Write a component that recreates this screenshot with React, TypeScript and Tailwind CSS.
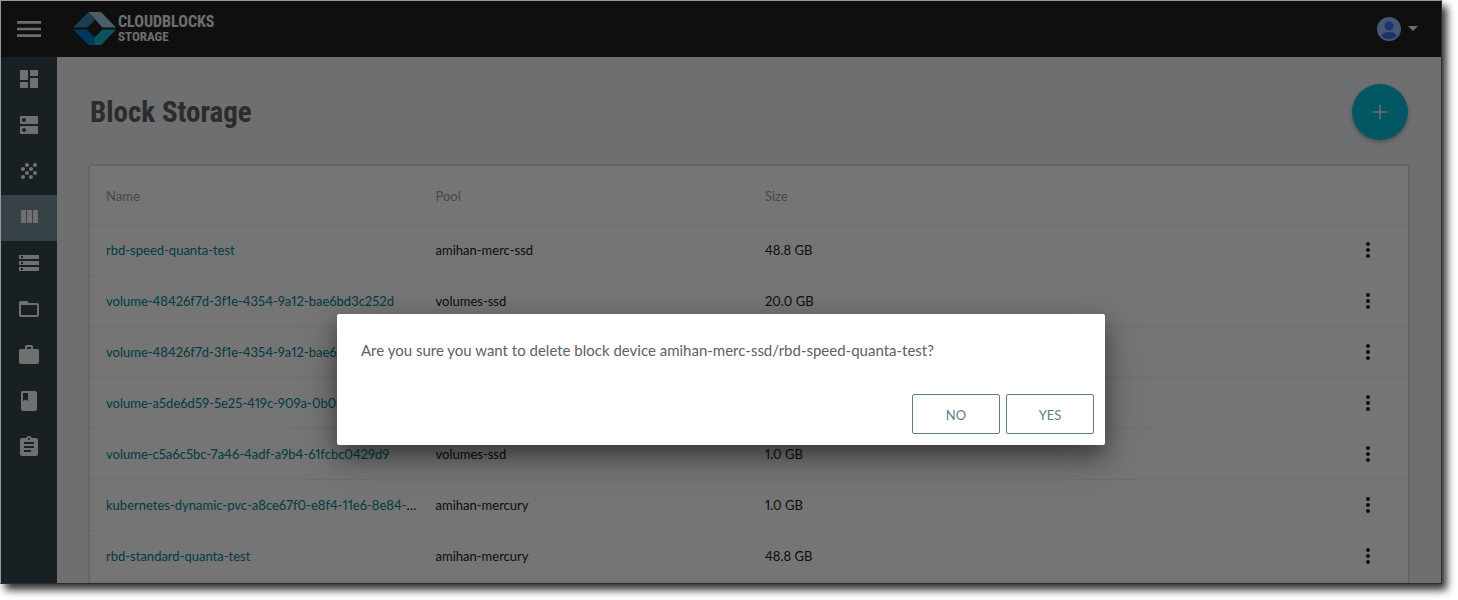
import React from 'react';

type IconProps = { d: string; className?: string };

function Icon({ d, className = 'size-6' }: IconProps) {
  return (
    <svg viewBox="0 0 24 24" className={className} fill="currentColor" aria-hidden="true">
      <path d={d} />
    </svg>
  );
}

const MENU = 'M3 18h18v-2H3v2zm0-5h18v-2H3v2zm0-7v2h18V6H3z';
const MORE =
  'M12 8c1.1 0 2-.9 2-2s-.9-2-2-2-2 .9-2 2 .9 2 2 2zm0 2c-1.1 0-2 .9-2 2s.9 2 2 2 2-.9 2-2-.9-2-2-2zm0 6c-1.1 0-2 .9-2 2s.9 2 2 2 2-.9 2-2-.9-2-2-2z';
const ADD = 'M19.2 12.75h-6.45v6.45h-1.5v-6.45H4.8v-1.5h6.45V4.8h1.5v6.45h6.45z';

const nav = [
  { label: 'Dashboard', d: 'M3 13h8V3H3v10zm0 8h8v-6H3v6zm10 0h8V11h-8v10zm0-18v6h8V3h-8z' },
  {
    label: 'Hosts',
    d: 'M20 13H4c-.55 0-1 .45-1 1v6c0 .55.45 1 1 1h16c.55 0 1-.45 1-1v-6c0-.55-.45-1-1-1zM7 19c-1.1 0-2-.9-2-2s.9-2 2-2 2 .9 2 2-.9 2-2 2zM20 3H4c-.55 0-1 .45-1 1v6c0 .55.45 1 1 1h16c.55 0 1-.45 1-1V4c0-.55-.45-1-1-1zM7 9c-1.1 0-2-.9-2-2s.9-2 2-2 2 .9 2 2-.9 2-2 2z',
  },
  {
    label: 'Pools',
    d: 'M10 12c-1.1 0-2 .9-2 2s.9 2 2 2 2-.9 2-2-.9-2-2-2zM6 8c-1.1 0-2 .9-2 2s.9 2 2 2 2-.9 2-2-.9-2-2-2zm0 8c-1.1 0-2 .9-2 2s.9 2 2 2 2-.9 2-2-.9-2-2-2zm12-8c1.1 0 2-.9 2-2s-.9-2-2-2-2 .9-2 2 .9 2 2 2zm-4 8c-1.1 0-2 .9-2 2s.9 2 2 2 2-.9 2-2-.9-2-2-2zm4-4c-1.1 0-2 .9-2 2s.9 2 2 2 2-.9 2-2-.9-2-2-2zm-4-4c-1.1 0-2 .9-2 2s.9 2 2 2 2-.9 2-2-.9-2-2-2zm-4-4c-1.1 0-2 .9-2 2s.9 2 2 2 2-.9 2-2-.9-2-2-2z',
  },
  { label: 'Block Storage', active: true, d: 'M10 18h5V5h-5v13zm-6 0h5V5H4v13zM16 5v13h5V5h-5z' },
  {
    label: 'Object Storage',
    d: 'M2 20h20v-4H2v4zm2-3h2v2H4v-2zM2 4v4h20V4H2zm4 3H4V5h2v2zm-4 7h20v-4H2v4zm2-3h2v2H4v-2z',
  },
  {
    label: 'File Storage',
    d: 'M20 6h-8l-2-2H4c-1.1 0-1.99.9-1.99 2L2 18c0 1.1.9 2 2 2h16c1.1 0 2-.9 2-2V8c0-1.1-.9-2-2-2zm0 12H4V8h16v10z',
  },
  {
    label: 'Jobs',
    d: 'M20 6h-4V4c0-1.11-.89-2-2-2h-4c-1.11 0-2 .89-2 2v2H4c-1.11 0-1.99.89-1.99 2L2 19c0 1.11.89 2 2 2h16c1.11 0 2-.89 2-2V8c0-1.11-.89-2-2-2zm-6 0h-4V4h4v2z',
  },
  {
    label: 'Docs',
    d: 'M18 2H6c-1.1 0-2 .9-2 2v16c0 1.1.9 2 2 2h12c1.1 0 2-.9 2-2V4c0-1.1-.9-2-2-2zM6 4h5v8l-2.5-1.5L6 12V4z',
  },
  {
    label: 'Logs',
    d: 'M19 3h-4.18C14.4 1.84 13.3 1 12 1c-1.3 0-2.4.84-2.82 2H5c-1.1 0-2 .9-2 2v14c0 1.1.9 2 2 2h14c1.1 0 2-.9 2-2V5c0-1.1-.9-2-2-2zm-7 0c.55 0 1 .45 1 1s-.45 1-1 1-1-.45-1-1 .45-1 1-1zm2 14H7v-2h7v2zm3-4H7v-2h10v2zm0-4H7V7h10v2z',
  },
];

const devices = [
  { name: 'rbd-speed-quanta-test', pool: 'amihan-merc-ssd', size: '48.8 GB' },
  { name: 'volume-48426f7d-3f1e-4354-9a12-bae6bd3c252d', pool: 'volumes-ssd', size: '20.0 GB' },
  { name: 'volume-48426f7d-3f1e-4354-9a12-bae6bd3c252d', pool: 'volumes-ssd', size: '20.0 GB' },
  { name: 'volume-a5de6d59-5e25-419c-909a-0b0a4c1d7e52', pool: 'volumes-ssd', size: '1.0 GB' },
  { name: 'volume-c5a6c5bc-7a46-4adf-a9b4-61fcbc0429d9', pool: 'volumes-ssd', size: '1.0 GB' },
  { name: 'kubernetes-dynamic-pvc-a8ce67f0-e8f4-11e6-8e84-', clipped: true, pool: 'amihan-mercury', size: '1.0 GB' },
  { name: 'rbd-standard-quanta-test', pool: 'amihan-mercury', size: '48.8 GB' },
];

function Logo() {
  return (
    <a href="#" className="flex items-center gap-[2px] text-[#eeeeee]">
      <svg viewBox="0 0 43 33" className="h-[33px] w-[43px]" aria-hidden="true">
        <path d="M0 15.5 15.5 0 22 8 14 15.5Z" fill="#3d88ae" />
        <path d="M15.5 0H28L43 15.5H29.5Z" fill="#a3cde6" />
        <path d="M0 17.5H14L21.5 25.5V33H15.5Z" fill="#007acc" />
        <path d="M29.5 17.5H43L28 33H21.5V25.5Z" fill="#1ab8cc" />
      </svg>
      <span className="flex flex-col font-['Liberation_Sans_Narrow','Roboto_Condensed',sans-serif] font-bold uppercase">
        <span className="text-[16px] leading-4">Cloudblocks</span>
        <span className="text-[13px] leading-[14px]">Storage</span>
      </span>
    </a>
  );
}

function Header() {
  return (
    <header className="flex h-14 shrink-0 items-center bg-[#212121] pr-[23px] pb-px pl-3 text-[#eeeeee]">
      <button type="button" aria-label="Menu" className="mr-[28px]">
        <Icon d={MENU} className="size-8" />
      </button>
      <Logo />
      <button type="button" aria-label="Account" className="ml-auto flex items-center gap-[7px]">
        <svg viewBox="0 0 24 24" className="size-6" aria-hidden="true">
          <circle cx="12" cy="12" r="12" fill="#9dbcff" />
          <circle cx="12" cy="9" r="4.5" fill="#3f6fe8" />
          <path d="M4.5 19c.5-2.5 3-4 7.5-4s7 1.5 7.5 4a10.5 10.5 0 0 1-15 0Z" fill="#3f6fe8" />
        </svg>
        <svg viewBox="0 0 10 5" className="h-[5px] w-[10px]" fill="currentColor" aria-hidden="true">
          <path d="M0 0h10L5 5z" />
        </svg>
      </button>
    </header>
  );
}

function Sidebar() {
  return (
    <nav className="flex w-14 shrink-0 flex-col bg-[#37474f] text-[#f5f5f5]">
      {nav.map((item) => (
        <a
          key={item.label}
          href="#"
          aria-label={item.label}
          className={
            item.active
              ? 'flex h-[46px] items-center justify-center bg-[#78909c] pb-[2px]'
              : 'flex h-[46px] items-center justify-center pb-[2px]'
          }
        >
          <Icon d={item.d} />
        </a>
      ))}
    </nav>
  );
}

function DeviceTable() {
  return (
    <div className="bg-white pb-14 shadow-[0_0_2px_1px_rgba(84,110,122,0.3)]">
      <table className="w-full table-fixed border-collapse text-left text-[13px] text-[#212121] proportional-nums">
        <thead>
          <tr className="h-[58px] border-b border-[#eceff1] text-[#a0a0a0]">
            <th className="px-4 pt-1 font-normal">Name</th>
            <th className="px-4 pt-1 font-normal">Pool</th>
            <th className="px-4 pt-1 font-normal">Size</th>
            <th aria-label="Actions" />
          </tr>
        </thead>
        <tbody>
          {devices.map((device, i) => (
            <tr key={i} className="h-[51px] border-b border-[#eceff1]">
              <td className="overflow-hidden px-4 pt-[2px] whitespace-nowrap">
                <a href="#" className="text-[#00838f]">
                  {device.name}
                </a>
                {device.clipped && '…'}
              </td>
              <td className="px-4 pt-[2px]">{device.pool}</td>
              <td className="px-4 pt-[2px]">{device.size}</td>
              <td className="px-4">
                <button type="button" aria-label="More actions" className="ml-auto flex w-12 justify-center">
                  <Icon d={MORE} />
                </button>
              </td>
            </tr>
          ))}
        </tbody>
      </table>
    </div>
  );
}

function ConfirmDialog() {
  return (
    <div className="absolute inset-0 flex items-start justify-center bg-black/54 pt-[313px]">
      <div
        role="dialog"
        aria-modal="true"
        aria-labelledby="confirm-text"
        className="w-full max-w-3xl rounded-[2px] bg-white shadow-[0_10px_20px_rgba(0,0,0,0.35),0_14px_40px_rgba(0,0,0,0.25)]"
      >
        <p id="confirm-text" className="px-6 pt-6 text-[15px] leading-6 text-[#616161]">
          Are you sure you want to delete block device amihan-merc-ssd/rbd-speed-quanta-test?
        </p>
        <div className="flex justify-end gap-[6px] px-[11px] pt-8 pb-[11px] text-[13px] text-[#607d8b]">
          <button type="button" className="h-10 w-[88px] rounded-[2px] border border-[#607d8b] pt-[3px]">
            NO
          </button>
          <button type="button" className="h-10 w-[88px] rounded-[2px] border border-[#607d8b] pt-[3px]">
            YES
          </button>
        </div>
      </div>
    </div>
  );
}

export default function App() {
  return (
    <div className="h-screen overflow-hidden bg-white pr-4 pb-4 font-['Lato',sans-serif]">
      <div className="relative flex h-full flex-col overflow-hidden border border-t-[#999999] border-r-[#2b2b2b] border-b-[#2b2b2b] border-l-[#999999] shadow-[5px_6px_8px_rgba(0,0,0,0.8)]">
        <Header />
        <div className="flex min-h-0 flex-1">
          <Sidebar />
          <main className="min-w-0 flex-1 overflow-hidden bg-[#f0f2f7] px-[33px] pt-[27px]">
            <div className="mb-[26px] flex items-center justify-between">
              <h1 className="font-['Liberation_Sans_Narrow','Roboto_Condensed',sans-serif] text-[29px] leading-9 font-bold text-[#616161]">
                Block Storage
              </h1>
              <button
                type="button"
                aria-label="Add block device"
                className="flex size-14 items-center justify-center rounded-full bg-[#00bcd4] text-[#eeeeee] shadow-[0_2px_4px_rgba(0,0,0,0.3)]"
              >
                <Icon d={ADD} />
              </button>
            </div>
            <DeviceTable />
          </main>
        </div>
        <ConfirmDialog />
      </div>
    </div>
  );
}
